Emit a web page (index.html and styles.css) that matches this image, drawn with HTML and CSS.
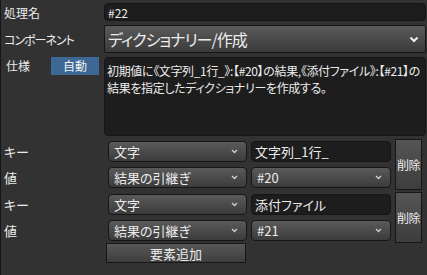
FILE: index.html
```html
<!DOCTYPE html>
<html lang="ja">
<head>
    <meta charset="UTF-8">
    <title>処理編集</title>
    <link rel="stylesheet" href="styles.css">
</head>
<body>
    <div class="panel">
        <!-- 基本情報 -->
        <div class="form-grid">
            <div class="label">処理名</div>
            <div class="text-input name-input">#22</div>

            <div class="label narrow">コンポーネント</div>
            <div class="select big-select">
                <span>ディクショナリー/作成</span>
                <svg width="10" height="7" viewBox="0 0 10 7"><polyline points="1.5,1.5 5,5 8.5,1.5" fill="none" stroke="#f0f0f0" stroke-width="2"/></svg>
            </div>

            <div class="label spec-label">
                <span>仕様</span>
                <span class="badge">自動</span>
            </div>
            <div class="text-area">初期値に《文字列_1行_》:【#20】の結果,《添付ファイル》:【#21】の<br>結果を指定したディクショナリーを作成する。</div>
        </div>

        <!-- 要素 -->
        <div class="pair">
            <div class="label">キー</div>
            <div class="select small-select"><span>文字</span><svg width="7" height="5" viewBox="0 0 7 5"><polyline points="1,1 3.5,3.5 6,1" fill="none" stroke="#cfcfcf" stroke-width="1.3"/></svg></div>
            <div class="text-input pair-input">文字列_1行_</div>
            <div class="del-btn">削除</div>
            <div class="label">値</div>
            <div class="select small-select"><span>結果の引継ぎ</span><svg width="7" height="5" viewBox="0 0 7 5"><polyline points="1,1 3.5,3.5 6,1" fill="none" stroke="#cfcfcf" stroke-width="1.3"/></svg></div>
            <div class="select small-select"><span>#20</span><svg width="7" height="5" viewBox="0 0 7 5"><polyline points="1,1 3.5,3.5 6,1" fill="none" stroke="#cfcfcf" stroke-width="1.3"/></svg></div>
        </div>

        <div class="pair">
            <div class="label">キー</div>
            <div class="select small-select"><span>文字</span><svg width="7" height="5" viewBox="0 0 7 5"><polyline points="1,1 3.5,3.5 6,1" fill="none" stroke="#cfcfcf" stroke-width="1.3"/></svg></div>
            <div class="text-input pair-input">添付ファイル</div>
            <div class="del-btn">削除</div>
            <div class="label">値</div>
            <div class="select small-select"><span>結果の引継ぎ</span><svg width="7" height="5" viewBox="0 0 7 5"><polyline points="1,1 3.5,3.5 6,1" fill="none" stroke="#cfcfcf" stroke-width="1.3"/></svg></div>
            <div class="select small-select"><span>#21</span><svg width="7" height="5" viewBox="0 0 7 5"><polyline points="1,1 3.5,3.5 6,1" fill="none" stroke="#cfcfcf" stroke-width="1.3"/></svg></div>
        </div>

        <div class="add-btn">要素追加</div>
    </div>
</body>
</html>
```

FILE: styles.css
```css
:root {
    --bg-color: #323232;
    --field-bg: #1d1d1d;
    --edge: #161616;
    --text: #ececec;
}

body {
    margin: 0;
    background: var(--bg-color);
    color: var(--text);
    font-family: "Noto Sans CJK JP", "Noto Sans", sans-serif;
    font-size: 12px;
    font-feature-settings: "palt";
}

.panel {
    min-height: 275px;
    box-sizing: border-box;
    border-left: 1px solid var(--edge);
    padding: 3px 1px 0 0;
}

/* Top Form */
.form-grid {
    display: grid;
    grid-template-columns: 103px 1fr;
    row-gap: 4px;
}

.label {
    display: flex;
    align-items: center;
    padding-left: 3px;
    white-space: nowrap;
}

.narrow {
    letter-spacing: -1px;
}

.spec-label {
    align-items: flex-start;
    padding-left: 5px;
}

.badge {
    margin-left: 21px;
    width: 48px;
    height: 18px;
    line-height: 18px;
    text-align: center;
    background: #3d6794;
    color: #f4f4f4;
}

.text-input {
    background: var(--field-bg);
    border: 1px solid var(--edge);
    border-radius: 4px;
    box-sizing: border-box;
    padding-left: 3px;
    display: flex;
    align-items: center;
    white-space: nowrap;
}

.name-input {
    height: 18px;
}

.select {
    display: flex;
    align-items: center;
    justify-content: space-between;
    box-sizing: border-box;
    border: 1px solid var(--edge);
    background: linear-gradient(#5a5a5a, #3b3b3b);
    white-space: nowrap;
}

.big-select {
    height: 28px;
    border-radius: 2px;
    padding: 0 6px 0 3px;
    font-size: 16px;
    letter-spacing: -1px;
}

.text-area {
    height: 79px;
    box-sizing: border-box;
    background: var(--field-bg);
    border: 1px solid var(--edge);
    border-radius: 4px;
    padding: 4px 2px 0 2px;
    line-height: 17px;
    letter-spacing: -0.35px;
    white-space: nowrap;
    overflow: hidden;
}

/* Key / Value Pairs */
.pair {
    display: grid;
    grid-template-columns: 103px 139px 140px 27px;
    grid-template-rows: 25.5px 25.5px;
    column-gap: 4px;
    align-items: center;
    margin-top: 3px;
    font-size: 13px;
}

.pair + .pair {
    margin-top: 2px;
}

.small-select {
    height: 21px;
    border-radius: 4px;
    padding: 0 8px 0 5px;
}

.pair-input {
    height: 21px;
    align-self: start;
    margin-top: 2px;
}

.del-btn {
    grid-row: span 2;
    align-self: stretch;
    display: flex;
    align-items: center;
    justify-content: center;
    border: 1px solid var(--edge);
    background: linear-gradient(#555, #3d3d3d);
    font-size: 12px;
    letter-spacing: -0.5px;
    white-space: nowrap;
}

.add-btn {
    margin-left: 105px;
    width: 140px;
    height: 20px;
    box-sizing: border-box;
    border: 1px solid var(--edge);
    background: linear-gradient(#575757, #3e3e3e);
    display: flex;
    align-items: center;
    justify-content: center;
    font-size: 13px;
}
```
